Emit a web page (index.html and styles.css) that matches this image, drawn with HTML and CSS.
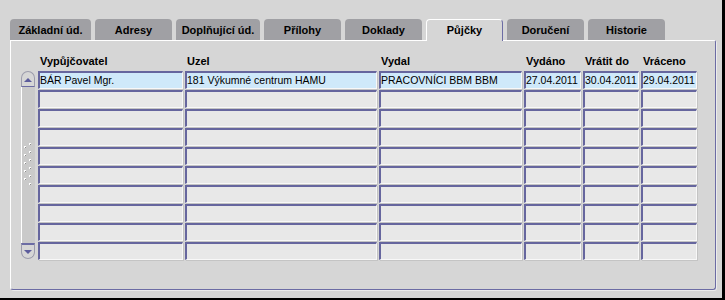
FILE: index.html
```html
<!DOCTYPE html>
<html lang="cs">
<head>
    <meta charset="UTF-8">
    <title>Půjčky</title>
    <link rel="stylesheet" href="styles.css">
</head>
<body>
    <div class="window">
        <div class="tabs">
            <div class="tab">Základní úd.</div>
            <div class="tab">Adresy</div>
            <div class="tab tab-wide">Doplňující úd.</div>
            <div class="tab">Přílohy</div>
            <div class="tab">Doklady</div>
            <div class="tab active">Půjčky</div>
            <div class="tab">Doručení</div>
            <div class="tab">Historie</div>
        </div>
        <div class="panel">
            <div class="block">
                <div class="scrollbar">
                    <div class="sb-btn sb-up"><span class="arrow-up"></span></div>
                    <div class="sb-track">
                        <svg class="grip" width="9" height="44" viewBox="0 0 9 44">
                            <g fill="#ffffff">
                                <rect x="0" y="3" width="2" height="2"/><rect x="0" y="11" width="2" height="2"/>
                                <rect x="0" y="19" width="2" height="2"/><rect x="0" y="27" width="2" height="2"/>
                                <rect x="0" y="35" width="2" height="2"/>
                                <rect x="5" y="0" width="2" height="2"/><rect x="5" y="8" width="2" height="2"/>
                                <rect x="5" y="16" width="2" height="2"/><rect x="5" y="24" width="2" height="2"/>
                                <rect x="5" y="32" width="2" height="2"/><rect x="5" y="40" width="2" height="2"/>
                            </g>
                            <g fill="#8c8c8c">
                                <rect x="1" y="4" width="1" height="1"/><rect x="1" y="12" width="1" height="1"/>
                                <rect x="1" y="20" width="1" height="1"/><rect x="1" y="28" width="1" height="1"/>
                                <rect x="1" y="36" width="1" height="1"/>
                                <rect x="6" y="1" width="1" height="1"/><rect x="6" y="9" width="1" height="1"/>
                                <rect x="6" y="17" width="1" height="1"/><rect x="6" y="25" width="1" height="1"/>
                                <rect x="6" y="33" width="1" height="1"/><rect x="6" y="41" width="1" height="1"/>
                            </g>
                        </svg>
                    </div>
                    <div class="sb-btn sb-down"><span class="arrow-down"></span></div>
                </div>
                <div class="table">
                    <div class="head">
                        <div>Vypůjčovatel</div>
                        <div>Uzel</div>
                        <div>Vydal</div>
                        <div>Vydáno</div>
                        <div>Vrátit do</div>
                        <div>Vráceno</div>
                    </div>
                    <div class="rows" id="rows">
                        <div class="cell current">BÁR Pavel Mgr.</div>
                        <div class="cell current">181 Výkumné centrum HAMU</div>
                        <div class="cell current">PRACOVNÍCI BBM BBM</div>
                        <div class="cell current">27.04.2011</div>
                        <div class="cell current">30.04.2011</div>
                        <div class="cell current">29.04.2011</div>
                    </div>
                </div>
            </div>
        </div>
    </div>
    <script>
        // fill the remaining empty record rows
        const rows = document.getElementById('rows');
        for (let i = 0; i < 9 * 6; i++) {
            const cell = document.createElement('div');
            cell.className = 'cell';
            rows.appendChild(cell);
        }
    </script>
</body>
</html>
```

FILE: styles.css
```css
/* Oracle Forms style tab canvas */
body {
    margin: 0;
    background-color: #d6d6d6;
    font-family: "Liberation Sans", Arial, sans-serif;
    font-size: 11px;
    color: #000;
}
.window {
    width: 712px;
    height: 279px;
    padding: 19px 0 0 10px;
    border-right: 3px solid #000;
    border-bottom: 2px solid #000;
}
.tabs {
    display: flex;
    gap: 4px;
    height: 21px;
}
.tab {
    width: 77px;
    height: 21px;
    background-color: #a0a0a4;
    border-radius: 4px 4px 0 0;
    font-weight: bold;
    text-align: center;
    line-height: 22px;
    box-sizing: border-box;
}
.tab:first-child {
    width: 81px;
}
.tab-wide {
    width: 84px;
}
.tab.active {
    position: relative;
    z-index: 1;
    height: 22px;
    margin-bottom: -1px;
    background-color: #d6d6d6;
    border-top: 1px solid #fff;
    border-left: 1px solid #fff;
    border-right: 1px solid #6c6ca4;
    line-height: 21px;
}
.panel {
    width: 706px;
    height: 250px;
    box-sizing: border-box;
    border-top: 1px solid #fff;
    border-left: 1px solid #fff;
    border-right: 1px solid #6c6ca4;
    border-bottom: 1px solid #6c6ca4;
    border-radius: 0 2px 3px 3px;
    box-shadow: 1px 1px 0 #ececec;
    padding: 30px 0 0 10px;
}
.block {
    display: flex;
    gap: 3px;
}
.scrollbar {
    width: 14px;
    display: flex;
    flex-direction: column;
}
.sb-btn {
    height: 16px;
    box-sizing: border-box;
    border: 1px solid #9c9cac;
    background-color: #d6d6d6;
    display: flex;
    align-items: center;
    justify-content: center;
}
.sb-up {
    border-radius: 7px 7px 0 0;
    border-bottom-color: #6c6ca4;
}
.sb-down {
    border-radius: 0 0 7px 7px;
    border-top: 2px solid #6c6ca4;
}
.arrow-up {
    width: 0;
    height: 0;
    border-left: 4px solid transparent;
    border-right: 4px solid transparent;
    border-bottom: 4px solid #5c5c9c;
    margin-top: 2px;
}
.arrow-down {
    width: 0;
    height: 0;
    border-left: 4px solid transparent;
    border-right: 4px solid transparent;
    border-top: 4px solid #5c5c9c;
}
.sb-track {
    height: 156px;
    background-color: #cacaca;
    border-left: 1px solid #fff;
    display: flex;
    align-items: center;
    padding-left: 2px;
}
.grip {
    display: block;
}
.table {
    display: flex;
    flex-direction: column;
}
.head, .rows {
    display: grid;
    grid-template-columns: 145px 192px 143px 57px 56px 56px;
    column-gap: 2px;
}
.head {
    font-weight: bold;
    margin-top: -17px;
    height: 17px;
    line-height: 14px;
}
.head div {
    padding-left: 2px;
}
.rows {
    row-gap: 1px;
}
.cell {
    height: 18px;
    box-sizing: border-box;
    background-color: #e8e8e8;
    border-top: 2px solid #66669e;
    border-left: 2px solid #66669e;
    border-right: 1px solid #f8f8f8;
    border-bottom: 1px solid #f8f8f8;
    box-shadow: 1px 1px 0 #c4c4c4;
    font-size: 10.5px;
    line-height: 15px;
    padding-left: 0;
    white-space: nowrap;
    overflow: hidden;
}
.cell.current {
    background-color: #cfe9fa;
}
```
